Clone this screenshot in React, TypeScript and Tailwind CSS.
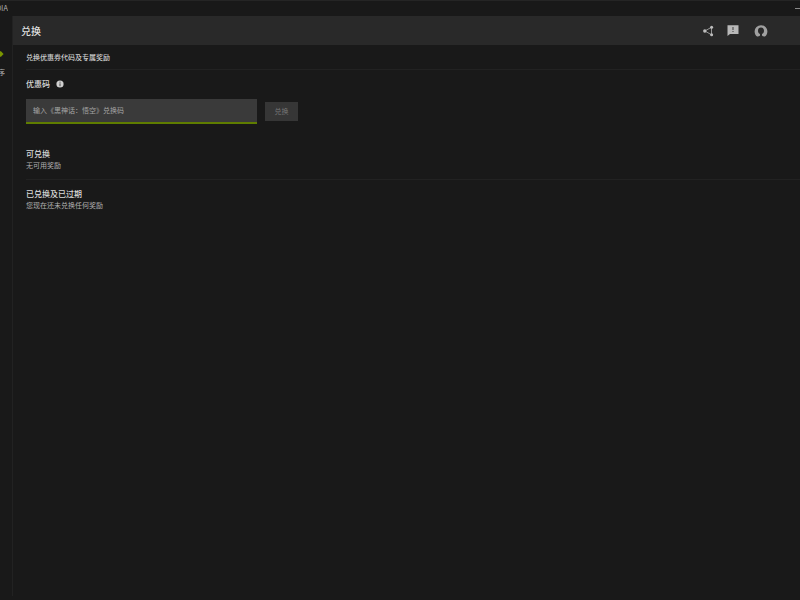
import { useState } from "react";

const font = "font-['Inter','Noto_Sans_CJK_SC',sans-serif]";

function ShareIcon() {
  return (
    <svg viewBox="0 0 12 12" className="size-3" fill="#bdbdbd" stroke="none">
      <path d="M9.5 2.2 2.9 6l6.6 3.8M9.5 2.2v7.6" fill="none" stroke="#a0a0a0" strokeWidth="0.9" />
      <circle cx="9.6" cy="2.2" r="1.5" />
      <circle cx="2.8" cy="6" r="1.7" />
      <circle cx="9.6" cy="9.8" r="1.5" />
    </svg>
  );
}

function FeedbackIcon() {
  return (
    <svg viewBox="0 0 12 12" className="size-3">
      <path d="M0.5 0.2h11v8.9H3L0.5 11z" fill="#b8b8b8" />
      <path d="M6 2v3M6 5.9v1.1" stroke="#505050" strokeWidth="1.2" />
    </svg>
  );
}

function AccountIcon() {
  return (
    <svg viewBox="0 0 14 14" className="size-3.5">
      <path
        d="M7 1.2A6.4 6 0 0 0 .6 7.2c0 2.4 1 4.3 2.5 5.4 1.2 0 2.3-.4 2.9-1.1v-1.4C4.6 9.4 4 8 4 6.7 4 4.7 5.2 3.5 7 3.5s3 1.2 3 3.2c0 1.3-.6 2.7-2 3.4v1.4c.6.7 1.7 1.1 2.9 1.1 1.5-1.1 2.5-3 2.5-5.4A6.4 6 0 0 0 7 1.2z"
        fill="#a0a0a0"
      />
    </svg>
  );
}

function InfoIcon() {
  return (
    <svg viewBox="0 0 8 8" className="size-2">
      <circle cx="4" cy="4" r="3.6" fill="#d0d0d0" />
      <path d="M4 1.7v1M4 3.4v2.8" stroke="#444" strokeWidth="1" />
    </svg>
  );
}

function RewardSection({ title, text }: { title: string; text: string }) {
  return (
    <section>
      <h2 className="text-[8px] leading-3 font-medium text-[#dadada]">{title}</h2>
      <p className="text-[7px] leading-[11px] text-[#b0b0b0]">{text}</p>
    </section>
  );
}

export default function App() {
  const [code, setCode] = useState("");

  return (
    <div lang="zh-CN" className={`flex min-h-screen flex-col bg-[#191919] pb-1 text-[#d8d8d8] ${font}`}>
      {/* Window title bar */}
      <div className="flex h-4 items-center justify-between border-t border-[#252525]">
        <div className="flex w-2 justify-end overflow-hidden text-[7px] leading-3 text-[#b0b0b0]">
          <span>DIA</span>
        </div>
        <button type="button" aria-label="最小化" className="flex h-4 w-[5px] items-center">
          <span className="h-px w-full bg-[#8a8a8a]" />
        </button>
      </div>

      <div className="flex flex-1">
        {/* Collapsed side navigation */}
        <nav className="w-3 shrink-0 pt-[35px]">
          <svg viewBox="0 0 4 6" className="h-1.5 w-1">
            <path d="M0 0.2h1L3.6 3 1 5.8H0z" fill="#7a9600" />
          </svg>
          <div className="mt-2.5 flex w-[5px] justify-end overflow-hidden text-[7px] leading-3 text-[#b0b0b0]">
            <span>序</span>
          </div>
        </nav>

        <div className="flex-1 border-l border-[#222222]">
          <header className="flex h-[29px] items-center justify-between bg-[#292929] pr-8 pl-2">
            <h1 className="text-[10px] leading-4 font-medium text-[#dedede]">兑换</h1>
            <div className="flex items-center">
              <button type="button" aria-label="分享">
                <ShareIcon />
              </button>
              <button type="button" aria-label="反馈" className="ml-[13px]">
                <FeedbackIcon />
              </button>
              <button type="button" aria-label="帐户" className="ml-[15px]">
                <AccountIcon />
              </button>
            </div>
          </header>

          <main className="pl-[13px]">
            <p className="border-b border-[#222222] pt-[7px] pb-[5px] text-[7px] leading-3 font-medium text-[#cecece]">
              兑换优惠券代码及专属奖励
            </p>

            <form className="pt-2" onSubmit={(e) => e.preventDefault()}>
              <div className="flex items-center gap-1.5">
                <label htmlFor="code" className="text-[8px] leading-3 font-medium text-[#dadada]">
                  优惠码
                </label>
                <InfoIcon />
              </div>
              <div className="mt-[9px] flex items-center gap-2">
                <input
                  id="code"
                  type="text"
                  value={code}
                  onChange={(e) => setCode(e.target.value)}
                  placeholder="输入《黑神话：悟空》兑换码"
                  className="h-[25px] w-[231px] border-b-2 border-[#5f7d00] bg-[#3a3a3a] px-[7px] text-[7px] outline-none placeholder:text-[#a4a4a4]"
                />
                <button
                  type="submit"
                  disabled={!code}
                  className="h-[19px] w-[33px] bg-[#363636] text-[7px] leading-3 text-[#757575]"
                >
                  兑换
                </button>
              </div>
            </form>

            <div className="mt-6 border-b border-[#222222] pb-2">
              <RewardSection title="可兑换" text="无可用奖励" />
            </div>
            <div className="pt-2">
              <RewardSection title="已兑换及已过期" text="您现在还未兑换任何奖励" />
            </div>
          </main>
        </div>
      </div>
    </div>
  );
}
